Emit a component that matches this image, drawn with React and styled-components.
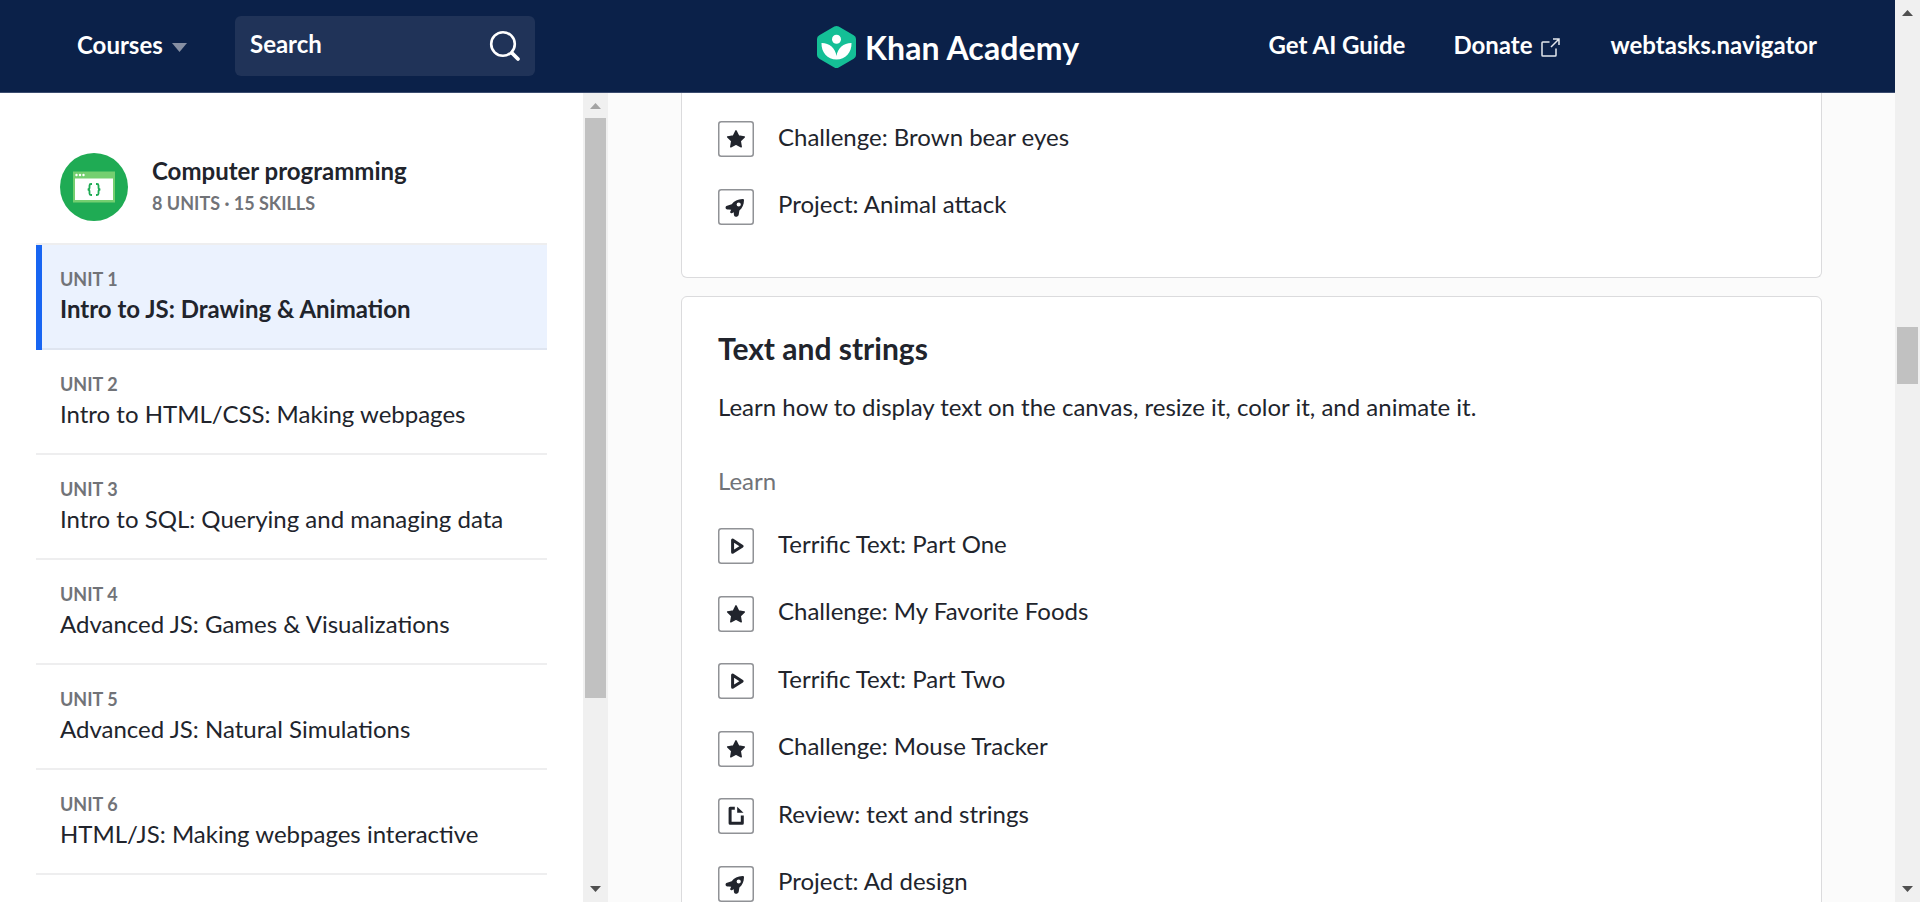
import React from 'react';
import styled, { createGlobalStyle } from 'styled-components';

const Global = createGlobalStyle`
  * { box-sizing: border-box; }
  body { margin: 0; font-family: Lato, "Liberation Sans", sans-serif; font-size: 24px; line-height: 30px; color: #21242c; background: #fff; overflow: hidden; }
`;

const Page = styled.div`display: flex; width: 1920px; height: 902px; overflow: hidden;`;
const Frame = styled.div`display: flex; flex-direction: column; width: 1895px; height: 902px;`;

const Header = styled.header`
  display: grid; grid-template-columns: 1fr auto 1fr; align-items: center; flex: none;
  height: 93px; padding: 0 78px 0 77px; background: #0b2149; border-bottom: 1px solid #3b4c6f;
  color: #fff; font-weight: 700; white-space: nowrap;
`;
const HeaderLeft = styled.div`display: flex; align-items: center; height: 60px;`;
const Courses = styled.a`display: flex; align-items: center; width: 158px; gap: 9px; padding-bottom: 2px;`;
const Caret = styled.svg`width: 15px; height: 9px; margin-top: 4px;`;
const Search = styled.div`
  display: flex; align-items: center; justify-content: space-between;
  width: 300px; height: 60px; padding: 0 14px 4px 15px; border-radius: 6px; background: #203358;
`;
const SearchGlyph = styled.svg`width: 32px; height: 32px; margin-top: 4px;`;
const Logo = styled.div`display: flex; align-items: center; gap: 9px; width: 262px; padding: 2px 0 0 1px;`;
const LogoMark = styled.svg`width: 39px; height: 42px; flex: none;`;
const LogoText = styled.span`font-size: 32px; line-height: 40px; letter-spacing: 0.1px; padding-top: 1px;`;
const HeaderRight = styled.nav`display: flex; justify-content: flex-end; align-items: center; gap: 48px; padding-bottom: 2px;`;
const NavLink = styled.a`display: flex; align-items: center; gap: 9px;`;
const ExtGlyph = styled.svg`width: 19px; height: 19px; margin: 4px 2px 0 0;`;

const Body = styled.div`display: flex; height: 809px;`;
const Sidebar = styled.aside`width: 583px; flex: none; padding: 60px 36px 0; background: #fff; overflow: hidden;`;
const Course = styled.div`display: flex; align-items: flex-start; gap: 24px; height: 68px; padding-left: 24px; margin-bottom: 22px;`;
const CourseBadge = styled.svg`width: 68px; height: 68px;`;
const CourseName = styled.div`font-weight: 700; line-height: 30px; padding-top: 3px;`;
const Small = styled.div`font-size: 18px; line-height: 24px; font-weight: 700; color: #717378;`;
const CourseMeta = styled(Small)`padding-top: 4px; line-height: 27px;`;
const Units = styled.div`border-top: 2px solid #eeeeef;`;
const Unit = styled.a`
  display: block; height: 105px; padding: 22px 0 0 24px;
  background: ${p => (p.$active ? '#ebf2fe' : '#fff')};
  box-shadow: inset 6px 0 0 ${p => (p.$active ? '#1865f2' : 'transparent')},
    inset 0 -2px 0 ${p => (p.$active ? '#dfe5f0' : '#eeeeef')};
  font-weight: ${p => (p.$active ? 700 : 400)};
`;
const UnitName = styled.div`line-height: 30px; padding-top: 3px;`;

const Track = styled.div`
  display: flex; flex-direction: column; flex: none; width: 25px; height: 100%;
  padding: 0 2px; background: #f0f0f0;
`;
const TrackEnd = styled.svg`flex: none; width: 21px; height: 25px;`;
const Space = styled.div`flex: 1;`;
const Thumb = styled.div`
  flex: none; width: 21px; height: ${p => p.$size}px; margin-top: ${p => p.$offset}px; background: #c1c1c1;
`;

const Main = styled.main`flex: 1; padding: 0 73px; background: #fbfbfb; overflow: hidden;`;
const Card = styled.section`
  border: 1px solid #dbdbdd; border-radius: 6px; background: #fff; padding: 0 36px;
`;
const TopCard = styled(Card)`
  height: 185px; padding-top: 27px; border-top: 0; border-radius: 0 0 6px 6px; margin-bottom: 18px;
`;
const TextCard = styled(Card)`height: 900px; padding-top: 32px;`;
const CardTitle = styled.h2`margin: 0; font-size: 30px; line-height: 38px; font-weight: 700;`;
const Lead = styled.p`margin: 25px 0 0; line-height: 30px;`;
const GroupLabel = styled.div`margin-top: 44px; line-height: 30px; color: #717378;`;
const Lessons = styled.div`margin-top: 31px;`;
const Lesson = styled.a`display: flex; gap: 24px; height: 67.5px;`;
const LessonGlyph = styled.svg`width: 36px; height: 36px; flex: none; margin-top: 1px;`;
const LessonName = styled.span`line-height: 30px; padding-top: 1.7px;`;

const shapes = {
  star: <path d="M18 9.800l2.600 5.300 5.700.8-4.100 4.100 1 5.800-5.200-2.700-5.200 2.700 1-5.800-4.100-4.100 5.700-.8z" fill="#21242c" stroke="#21242c" strokeWidth="1.500" strokeLinejoin="round" />,
  play: <path d="M14.600 12v12.300l9.500-6.150z" fill="none" stroke="#21242c" strokeWidth="3" strokeLinejoin="round" />,
  article: <><path d="M16.800 10.300h-4.700v14.900h12.200v-7.700" fill="none" stroke="#21242c" strokeWidth="3" strokeLinejoin="round" /><path d="M19.200 8.800l6.300 6h-6.300z" fill="#21242c" /></>,
  rocket: <path fill="#21242c" fillRule="evenodd" d="M24.600 9.900c.9-.1 1.500.5 1.400 1.400-.2 4.600-1.500 7.600-4.600 10.200l-.7 4.200c-.4 1.600-1.700 2.200-3 2.100-1.200-.1-1.800-1-1.800-2.200l-.2-2.300-1.800.9c-1.100.5-2.100-.5-1.600-1.600l.9-1.900-2.500-.1c-1.800 0-2.900-.6-3.100-1.700-.2-1 .4-1.700 1.500-2.100l4.600-1.500c2.500-3.600 5.800-5.300 10.900-5.400zM20.700 13.400a2.100 2.100 0 1 0 .01 4.200a2.100 2.100 0 1 0 0-4.200z" />,
};

function LessonRow({ kind, name }) {
  return (
    <Lesson>
      <LessonGlyph viewBox="0 0 36 36">
        <rect x=".75" y=".75" width="34.5" height="34.5" rx="2.5" fill="#fff" stroke="#909296" strokeWidth="1.5" />
        {shapes[kind]}
      </LessonGlyph>
      <LessonName>{name}</LessonName>
    </Lesson>
  );
}

function Scrollbar({ offset, size, atTop }) {
  return (
    <Track>
      <TrackEnd viewBox="0 0 21 25"><path d="M10.500 10L16 16H5z" fill={atTop ? '#a3a3a3' : '#505050'} /></TrackEnd>
      <Thumb $offset={offset} $size={size} />
      <Space />
      <TrackEnd viewBox="0 0 21 25"><path d="M10.500 15L16 9H5z" fill="#505050" /></TrackEnd>
    </Track>
  );
}

const units = [
  'Intro to JS: Drawing & Animation',
  'Intro to HTML/CSS: Making webpages',
  'Intro to SQL: Querying and managing data',
  'Advanced JS: Games & Visualizations',
  'Advanced JS: Natural Simulations',
  'HTML/JS: Making webpages interactive',
];

const lessons = [
  ['play', 'Terrific Text: Part One'],
  ['star', 'Challenge: My Favorite Foods'],
  ['play', 'Terrific Text: Part Two'],
  ['star', 'Challenge: Mouse Tracker'],
  ['article', 'Review: text and strings'],
  ['rocket', 'Project: Ad design'],
];

export default function App() {
  return (
    <>
      <Global />
      <Page>
        <Frame>
          <Header>
            <HeaderLeft>
              <Courses>Courses<Caret viewBox="0 0 15 9"><path d="M0 0h15L7.500 9z" fill="#868fa3" /></Caret></Courses>
              <Search>
                Search
                <SearchGlyph viewBox="0 0 32 32" fill="none" stroke="#fff" strokeLinecap="round">
                  <circle cx="14" cy="14" r="11.800" strokeWidth="2.600" />
                  <path d="M23 23l6 6" strokeWidth="3.800" />
                </SearchGlyph>
              </Search>
            </HeaderLeft>
            <Logo>
              <LogoMark viewBox="0 0 39 42">
                <path d="M17.300.6q2.200-1.200 4.400 0l15 8.600Q39 10.500 39 13v16q0 2.500-2.300 3.800l-15 8.600q-2.200 1.200-4.400 0l-15-8.600Q0 31.500 0 29V13q0-2.500 2.300-3.800z" fill="#14bf96" />
                <circle cx="19.500" cy="13.300" r="4.500" fill="#fff" />
                <path d="M4.500 17c7.500-.2 14 5 15 13 1-8 7.500-13.200 15-13 .4 9-6 16.500-15 16.500S4.100 26 4.500 17z" fill="#fff" />
              </LogoMark>
              <LogoText>Khan Academy</LogoText>
            </Logo>
            <HeaderRight>
              <NavLink>Get AI Guide</NavLink>
              <NavLink>
                Donate
                <ExtGlyph viewBox="0 0 19 19" fill="none" stroke="#e4e7ed" strokeWidth="1.500">
                  <path d="M8.500 4H1.800Q1 4 1 4.800v12.400q0 .8.800.8h12.400q.8 0 .8-.8v-6.700M12 1h6v6M18 1l-8 8" />
                </ExtGlyph>
              </NavLink>
              <NavLink>webtasks.navigator</NavLink>
            </HeaderRight>
          </Header>
          <Body>
            <Sidebar>
              <Course>
                <CourseBadge viewBox="0 0 68 68">
                  <circle cx="34" cy="34" r="34" fill="#1fab54" />
                  <path d="M13 18.500h42v31H13z" fill="#74cf70" />
                  <path d="M15 25.500h38v21.500H15z" fill="#fff" />
                  <g fill="#fff"><circle cx="16.500" cy="22" r="1.200" /><circle cx="20" cy="22" r="1.200" /><circle cx="23.500" cy="22" r="1.200" /></g>
                  <path d="M32 31h-1q-1.500 0-1.500 1.500v2q0 1.800-1.800 2 1.800.2 1.800 2v2q0 1.500 1.500 1.500h1M36 31h1q1.500 0 1.500 1.500v2q0 1.800 1.800 2-1.800.2-1.800 2v2q0 1.500-1.500 1.500h-1" fill="none" stroke="#1fab54" strokeWidth="1.800" />
                </CourseBadge>
                <div>
                  <CourseName>Computer programming</CourseName>
                  <CourseMeta>8 UNITS · 15 SKILLS</CourseMeta>
                </div>
              </Course>
              <Units>
                {units.map((name, i) => (
                  <Unit key={name} $active={i === 0}>
                    <Small>UNIT {i + 1}</Small>
                    <UnitName>{name}</UnitName>
                  </Unit>
                ))}
              </Units>
            </Sidebar>
            <Scrollbar offset={0} size={580} atTop />
            <Main>
              <TopCard>
                <LessonRow kind="star" name="Challenge: Brown bear eyes" />
                <LessonRow kind="rocket" name="Project: Animal attack" />
              </TopCard>
              <TextCard>
                <CardTitle>Text and strings</CardTitle>
                <Lead>Learn how to display text on the canvas, resize it, color it, and animate it.</Lead>
                <GroupLabel>Learn</GroupLabel>
                <Lessons>
                  {lessons.map(([kind, name]) => <LessonRow key={name} kind={kind} name={name} />)}
                </Lessons>
              </TextCard>
            </Main>
          </Body>
        </Frame>
        <Scrollbar offset={302} size={57} />
      </Page>
    </>
  );
}
